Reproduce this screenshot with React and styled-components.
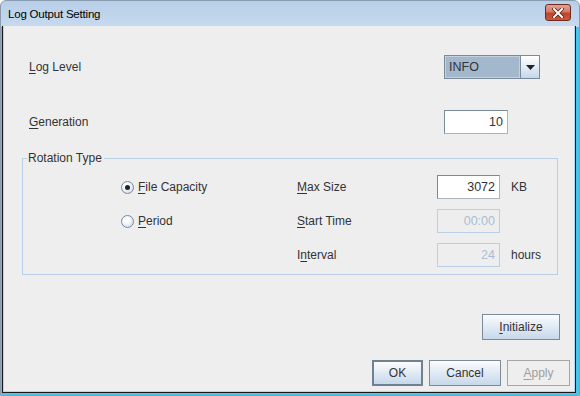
import React from 'react';
import styled, { createGlobalStyle, css } from 'styled-components';

const GlobalStyle = createGlobalStyle`
  html, body {
    margin: 0;
    padding: 0;
    background: #ffffff;
  }
  body {
    font-family: 'Liberation Sans', Arial, sans-serif;
    font-size: 12px;
    color: #333333;
  }
`;

const Window = styled.div`
  box-sizing: border-box;
  width: 580px;
  height: 396px;
  display: flex;
  flex-direction: column;
  border: 1px solid #8a9cb0;
  border-radius: 6px 6px 0 0;
  padding: 0 3px 2px 1px;
  background: linear-gradient(#b9cfe8 0, #c6daef 26px, #4cc4ec 26px);
  overflow: hidden;
`;

const TitleBar = styled.div`
  height: 25px;
  flex: none;
  display: flex;
  align-items: center;
  justify-content: space-between;
  padding: 0 5px 0 6px;
`;

const Title = styled.span`
  font-size: 11.5px;
  letter-spacing: -0.2px;
  color: #000000;
  padding-top: 1px;
`;

const CloseButton = styled.button`
  width: 26px;
  height: 17px;
  padding: 0;
  margin-top: -2px;
  border: 1px solid #6e2a20;
  border-radius: 3px;
  background: linear-gradient(#e3a394 0%, #d47a66 45%, #c04428 55%, #c95a3e 100%);
  display: flex;
  align-items: center;
  justify-content: center;
`;

const Content = styled.div`
  flex: 1;
  display: flex;
  flex-direction: column;
  background: #eeeeee;
  border: 1px solid #1a1a1a;
  border-top: none;
  box-shadow: inset 1px 0 0 #b5d6f2, inset -1px 0 0 #b5d6f2, inset 0 -1px 0 #b5d6f2;
  padding: 29px 0 0 0;
`;

const TopGrid = styled.div`
  display: grid;
  grid-template-columns: 1fr 96px;
  row-gap: 31px;
  align-items: center;
  padding: 0 35px 0 26px;
`;

const Label = styled.span`
  color: #333333;
  white-space: nowrap;
`;

const Key = styled.u`
  text-decoration: underline;
  text-underline-offset: 2px;
`;

const Combo = styled.div`
  box-sizing: border-box;
  width: 96px;
  height: 24px;
  display: flex;
  border: 1px solid #7a8a99;
`;

const ComboValue = styled.div`
  flex: 1;
  display: flex;
  align-items: center;
  padding-left: 3px;
  background: #a3b8cc;
  border: 1px solid #c3d1df;
  color: #333333;
  font-size: 12.5px;
`;

const ComboArrow = styled.div`
  width: 18px;
  border-left: 1px solid #7a8a99;
  background: linear-gradient(#ffffff, #c5d7ea);
  display: flex;
  align-items: center;
  justify-content: center;
`;

const TextField = styled.div`
  box-sizing: border-box;
  width: ${(p) => p.width || 63}px;
  height: 24px;
  display: flex;
  align-items: center;
  justify-content: flex-end;
  padding-right: 4px;
  font-size: 12.5px;
  ${(p) =>
    p.disabled
      ? css`
          border: 1px solid #b8cfe5;
          color: #a9bed3;
          background: #eeeeee;
        `
      : css`
          border: 1px solid #7a8a99;
          border-right-color: #a9b6c2;
          border-bottom-color: #a9b6c2;
          color: #333333;
          background: #ffffff;
        `}
`;

const Group = styled.fieldset`
  margin: 17px 17px 0 19px;
  padding: 10px 0 7px 98px;
  border: 1px solid #b8cfe5;
  min-width: 0;
`;

const Legend = styled.legend`
  padding: 0 2px 0 1px;
  margin-left: -94px;
  line-height: 14px;
  color: #333333;
`;

const GroupGrid = styled.div`
  display: grid;
  grid-template-columns: 176px 140px 63px auto;
  grid-auto-rows: 24px;
  row-gap: 10px;
  align-items: center;
`;

const Unit = styled.span`
  padding-left: 11px;
  color: #333333;
`;

const Radio = styled.label`
  display: flex;
  align-items: center;
  gap: 4px;
  color: #333333;
`;

const RadioCircle = styled.span`
  box-sizing: border-box;
  width: 13px;
  height: 13px;
  border-radius: 50%;
  border: 1px solid #7a8a99;
  background: radial-gradient(circle at 40% 35%, #ffffff 20%, #c3d5e8 100%);
  display: flex;
  align-items: center;
  justify-content: center;

  &::after {
    content: '';
    width: 5px;
    height: 5px;
    border-radius: 50%;
    background: ${(p) => (p.checked ? '#222222' : 'transparent')};
  }
`;

const InitRow = styled.div`
  display: flex;
  justify-content: flex-end;
  padding-right: 15px;
  margin-top: 39px;
`;

const ButtonRow = styled.div`
  display: flex;
  justify-content: flex-end;
  gap: 6px;
  padding-right: 5px;
  margin-top: 20px;
`;

const Button = styled.button`
  box-sizing: border-box;
  width: ${(p) => p.width}px;
  height: 26px;
  padding: 0;
  font-family: 'Liberation Sans', Arial, sans-serif;
  font-size: 12px;
  color: #333333;
  border: 1px solid #7a8a99;
  background: linear-gradient(#fbfcfe, #c6d8ea);
  ${(p) =>
    p.primary &&
    css`
      border: 2px solid #6f8193;
    `}
  ${(p) =>
    p.disabled &&
    css`
      border: 1px solid #a6a6a6;
      background: #eeeeee;
      color: #9e9e9e;
    `}
`;

const App = () => {
  return (
    <>
      <GlobalStyle />
      <Window>
        <TitleBar>
          <Title>Log Output Setting</Title>
          <CloseButton aria-label="Close">
            <svg width="12" height="10" viewBox="0 0 12 10">
              <path
                d="M2 1 L10 9 M10 1 L2 9"
                stroke="#5a1d14"
                strokeWidth="3.6"
                strokeLinecap="square"
              />
              <path
                d="M2 1 L10 9 M10 1 L2 9"
                stroke="#ffffff"
                strokeWidth="2"
                strokeLinecap="square"
              />
            </svg>
          </CloseButton>
        </TitleBar>
        <Content>
          <TopGrid>
            <Label>
              <Key>L</Key>og Level
            </Label>
            <Combo>
              <ComboValue>INFO</ComboValue>
              <ComboArrow>
                <svg width="9" height="5" viewBox="0 0 9 5">
                  <path d="M0 0 H9 L4.5 5 Z" fill="#222222" />
                </svg>
              </ComboArrow>
            </Combo>
            <Label>
              <Key>G</Key>eneration
            </Label>
            <TextField width={64}>10</TextField>
          </TopGrid>

          <Group>
            <Legend>Rotation Type</Legend>
            <GroupGrid>
              <Radio>
                <RadioCircle checked />
                <span>
                  <Key>F</Key>ile Capacity
                </span>
              </Radio>
              <Label>
                <Key>M</Key>ax Size
              </Label>
              <TextField>3072</TextField>
              <Unit>KB</Unit>

              <Radio>
                <RadioCircle />
                <span>
                  <Key>P</Key>eriod
                </span>
              </Radio>
              <Label>
                <Key>S</Key>tart Time
              </Label>
              <TextField disabled>00:00</TextField>
              <span />

              <span />
              <Label>
                I<Key>n</Key>terval
              </Label>
              <TextField disabled>24</TextField>
              <Unit>hours</Unit>
            </GroupGrid>
          </Group>

          <InitRow>
            <Button width={78}>
              <Key>I</Key>nitialize
            </Button>
          </InitRow>

          <ButtonRow>
            <Button width={51} primary>
              OK
            </Button>
            <Button width={72}>Cancel</Button>
            <Button width={63} disabled>
              <Key>A</Key>pply
            </Button>
          </ButtonRow>
        </Content>
      </Window>
    </>
  );
};

export default App;
